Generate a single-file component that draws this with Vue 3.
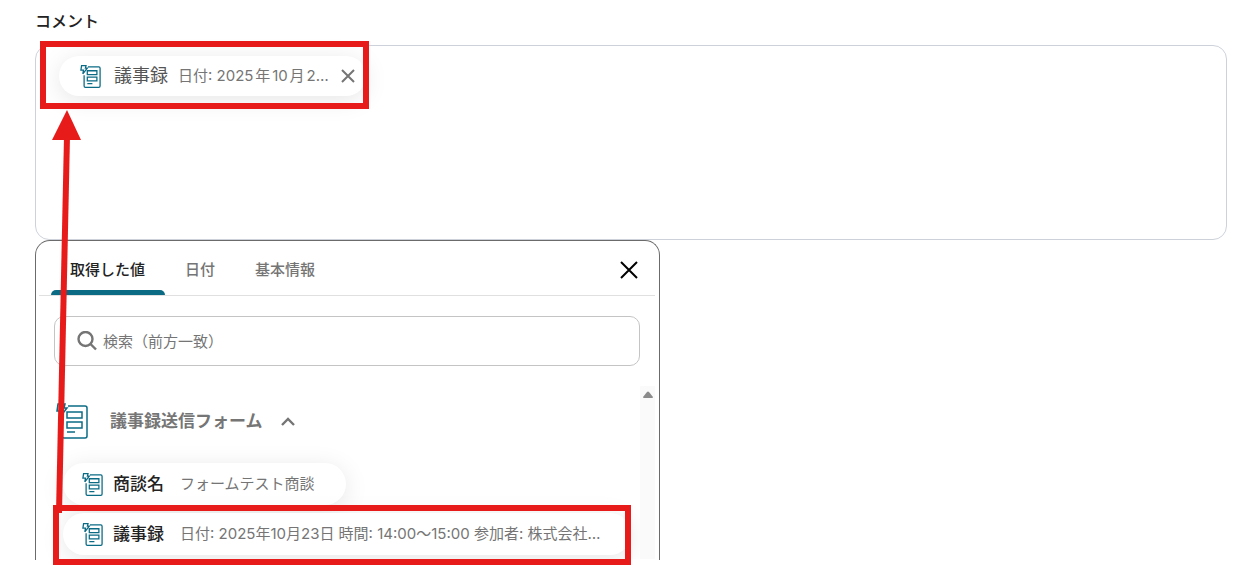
<script setup>
import { ref } from 'vue'

const tabs = ['取得した値', '日付', '基本情報']
const active = ref(0)
const query = ref('')
const open = ref(true)
const values = [
  { name: '商談名', text: 'フォームテスト商談' },
  { name: '議事録', text: '日付: 2025年10月23日 時間: 14:00～15:00 参加者: 株式会社…' },
]
</script>

<template>
  <main class="page">
    <svg class="defs" aria-hidden="true">
      <symbol id="form" viewBox="0 0 32 36">
        <path d="M12 3h17a2 2 0 0 1 2 2v28a2 2 0 0 1-2 2H8a2 2 0 0 1-2-2V16" />
        <path d="M2 1h7L8 5h3L4 14l1-6H1z" />
        <path d="M11 9h15v6H11zM11 19h15v6H11zM11 29h8" />
      </symbol>
    </svg>

    <h2 id="comment-label" class="label">コメント</h2>
    <div class="editor" role="textbox" aria-labelledby="comment-label" tabindex="0">
      <span class="chip token">
        <svg class="form-icon"><use href="#form" /></svg>
        <span class="name">議事録</span>
        <span class="value">日付: 2025年10月2…</span>
        <button class="remove" type="button" aria-label="削除">
          <svg viewBox="0 0 16 16"><path d="M2 2l12 12M14 2L2 14" /></svg>
        </button>
      </span>
    </div>

    <section class="picker">
      <header class="head">
        <div class="tabs" role="tablist">
          <button
            v-for="(tab, i) in tabs"
            :key="tab"
            type="button"
            role="tab"
            class="tab"
            :class="{ on: i === active }"
            :aria-selected="i === active"
            @click="active = i"
          >{{ tab }}</button>
        </div>
        <button class="close" type="button" aria-label="閉じる">
          <svg viewBox="0 0 18 18"><path d="M1 1l16 16M17 1L1 17" /></svg>
        </button>
      </header>

      <label class="search">
        <svg viewBox="0 0 20 20"><circle cx="8.5" cy="8" r="7" /><path d="M13.5 13l5.5 5.5" /></svg>
        <input v-model="query" type="text" placeholder="検索（前方一致）" aria-label="検索" />
      </label>

      <div class="body">
        <div class="list">
          <button class="group" type="button" :aria-expanded="open" @click="open = !open">
            <svg class="group-icon"><use href="#form" /></svg>
            <span>議事録送信フォーム</span>
            <svg class="chevron" viewBox="0 0 14 10"><path d="M1 9l6-6 6 6" /></svg>
          </button>
          <template v-if="open">
            <button v-for="v in values" :key="v.name" class="chip option" type="button">
              <svg class="form-icon"><use href="#form" /></svg>
              <span class="name">{{ v.name }}</span>
              <span class="value">{{ v.text }}</span>
            </button>
          </template>
        </div>
        <div class="scrollbar" aria-hidden="true">
          <svg viewBox="0 0 10 8"><path d="M4 1q1-1 2 0l4 5q0 1-1 1H1Q0 7 0 6z" /></svg>
        </div>
      </div>
    </section>

    <svg class="marks" aria-hidden="true">
      <rect x="43" y="44" width="323" height="62" />
      <rect x="56" y="508" width="572" height="54" />
      <path d="M59 513L67 136" />
      <path class="tip" d="M67 110l14 30H52z" />
    </svg>
  </main>
</template>

<style>
body {
  margin: 0;
  background: #fff;
}
</style>

<style scoped>
.page {
  position: relative;
  padding: 9px 9px 6px 35px;
  font-family: Inter, "Noto Sans CJK JP", sans-serif;
  font-size: 15px;
  color: #757575;
}
.page * {
  box-sizing: border-box;
}
button {
  padding: 0;
  border: 0;
  background: none;
  font: inherit;
  color: inherit;
  cursor: pointer;
}
svg {
  display: block;
  flex: none;
  fill: none;
  stroke: currentColor;
}
.defs {
  position: absolute;
  width: 0;
  height: 0;
}
.label {
  margin: 0 0 12px;
  font-size: 16px;
  line-height: 24px;
  font-weight: 500;
  color: #222;
}
.editor {
  height: 195px;
  padding: 10px 23px;
  border: 1px solid #cdd2da;
  border-radius: 14px;
  outline: 0;
}
.chip {
  display: flex;
  align-items: center;
  border-radius: 24px;
  background: #fff;
  box-shadow: 0 4px 24px rgba(0, 0, 0, 0.1);
  line-height: 24px;
}
.form-icon {
  width: 21px;
  height: 23px;
  color: #0b6b85;
  stroke-width: 2;
}
.name {
  flex: none;
}
.value {
  min-width: 0;
  overflow: hidden;
  text-overflow: ellipsis;
  white-space: nowrap;
}
.token {
  width: 307px;
  height: 40px;
  padding: 0 10px 0 21px;
}
.token .name {
  margin: 0 10px 0 13px;
  font-size: 18px;
  color: #555;
}
.token .value {
  text-autospace: normal;
}
.remove {
  margin-left: auto;
}
.remove svg {
  width: 16px;
  height: 16px;
  stroke-width: 2;
}
.picker {
  width: 625px;
  height: 320px;
  overflow: hidden;
  border: 1px solid #6b6b6b;
  border-bottom: 0;
  border-radius: 15px 15px 0 0;
  background: #fff;
}
.head {
  display: flex;
  justify-content: space-between;
  margin: 0 4px 20px 3px;
  padding: 0 17px 0 12px;
  border-bottom: 1px solid #e0e0e0;
}
.tabs {
  display: flex;
  gap: 1px;
}
.tab {
  position: relative;
  height: 54px;
  padding: 0 20px 0 19px;
  font-weight: 500;
}
.tab.on {
  color: #222;
}
.tab.on::after {
  content: "";
  position: absolute;
  inset: auto 0 0;
  height: 5px;
  border-radius: 5px 5px 0 0;
  background: #0b6b85;
}
.close {
  margin-top: 4px;
  color: #000;
}
.close svg {
  width: 18px;
  height: 18px;
  stroke-width: 2;
}
.search {
  display: flex;
  align-items: center;
  gap: 6px;
  height: 50px;
  margin: 0 19px 20px 18px;
  padding: 0 22px;
  border: 1px solid #c4c4c4;
  border-radius: 10px;
}
.search svg {
  width: 20px;
  height: 20px;
  stroke-width: 2.4;
}
.search input {
  flex: 1;
  min-width: 0;
  padding: 0;
  border: 0;
  outline: 0;
  background: none;
  font: inherit;
  color: inherit;
}
.search input::placeholder {
  color: #757575;
  opacity: 1;
}
.body {
  display: flex;
  margin-right: 4px;
}
.list {
  display: flex;
  flex: 1;
  flex-direction: column;
  align-items: flex-start;
  gap: 8px;
  min-width: 0;
  height: 173px;
  padding: 16px 4px 0 27px;
  overflow: hidden;
}
.group {
  display: flex;
  align-items: center;
  height: 38px;
  margin: 0 0 15px -7px;
  font-size: 17px;
  line-height: 24px;
  font-weight: 700;
}
.group-icon {
  width: 32px;
  height: 36px;
  margin-right: 22px;
  color: #0b6b85;
  stroke-width: 1.5;
}
.chevron {
  width: 14px;
  height: 10px;
  margin-left: 18px;
  stroke-width: 2.4;
}
.option {
  flex: none;
  max-width: 100%;
  height: 42px;
  padding: 0 31px 0 19px;
}
.option .name {
  margin: 0 16px 0 10px;
  font-size: 17px;
  font-weight: 500;
  color: #222;
}
.scrollbar {
  width: 15px;
  padding: 5px 3px;
  background: #fafafa;
}
.scrollbar svg {
  width: 10px;
  height: 8px;
  fill: #8b8b8b;
  stroke: none;
}
.marks {
  position: absolute;
  top: 0;
  left: 0;
  width: 640px;
  height: 566px;
  stroke: #e81b1b;
  stroke-width: 6;
  pointer-events: none;
}
.tip {
  fill: #e81b1b;
  stroke: none;
}
</style>
